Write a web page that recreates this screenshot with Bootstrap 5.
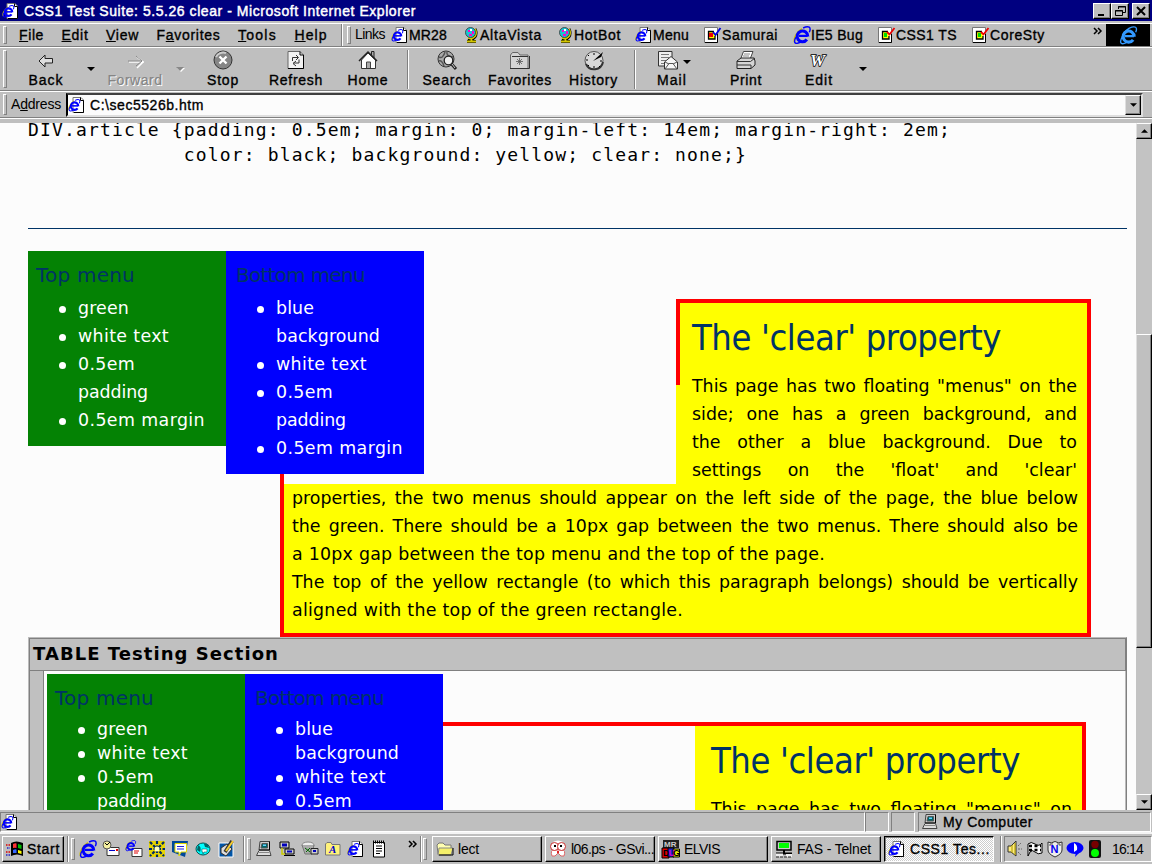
<!DOCTYPE html>
<html lang="en">
<head>
<meta charset="utf-8">
<title>CSS1 Test Suite: 5.5.26 clear - Microsoft Internet Explorer</title>
<link href="https://cdn.jsdelivr.net/npm/bootstrap@5.3.0/dist/css/bootstrap.min.css" rel="stylesheet">
<style>
body{margin:0;width:1152px;height:864px;overflow:hidden;background:#bfbfbf;color:#000;font:14px/16px "Liberation Sans",Arial,sans-serif}
svg{display:block;flex:none;overflow:visible}
[data-w]{display:inline-block;white-space:pre;flex:none}
.bolder{-webkit-text-stroke:.35px #000}
.titlebar{height:21px;background:#000080;color:#fff;padding:0 2px 0 2px}
.titlebar [data-w]{font-weight:500;-webkit-text-stroke:.45px #fff}
.title-edge{height:3px;border-bottom:1px solid #fff;background:#c0c0c0;flex:none}
.winbtn{width:18px;height:16px;background:#c0c0c0;border:1px solid;border-color:#fff #000 #000 #fff;box-shadow:inset -1px -1px #808080}
.win-close{margin-left:3px}
.band{border-bottom:1px solid #808080;box-shadow:0 1px #fff;margin-bottom:1px;padding-left:3px;flex:none}
.menu-row{height:23px}
.tool-row{height:43px}
.addr-row{height:26px}
.raised-label{margin-top:-2px}
.grip{width:4px;align-self:stretch;margin:2px 0;border:1px solid;border-color:#fff #808080 #808080 #fff;flex:none}
.vsep{width:2px;align-self:stretch;border-left:1px solid #808080;border-right:1px solid #fff;flex:none}
.menus{gap:17.5px;margin-left:12px;width:322px;flex:none}
.linkset{gap:15px;margin-left:6px}
.linkset svg{width:18px;height:18px}
.linkset>div{align-items:center}
.linkset .globe{width:16px}
.fav-a{margin-left:2px}.fav-b{margin-left:1px}.fav-c{margin-left:-1px}
.brand-tile{width:44px;height:22px;background:#000;margin-right:2px}
.tools{display:grid;grid-template-columns:64px 26px 62px 28px 58px 88px 56px 24px 54px 92px 55px 27px 48px 100px 46px 42px;margin-left:7px;height:42px}
.tools>div{display:flex;flex-direction:column;align-items:center;padding-top:2px}
.tools svg{width:22px;height:22px}
.tools .vsep{height:39px;align-self:center}
.tools .drop{padding-top:19px}
.drop svg{width:8px;height:4px}
.off{color:#858585;text-shadow:1px 1px #fff;-webkit-text-stroke:.2px #858585}
.mail-pic{margin-left:-8px}
.tools .mail-drop{left:35px;top:12px;width:8px;height:4px}
.addrbox{height:24px;width:1077px;border:2px solid;border-color:#404040 #dfdfdf #dfdfdf #000;background:#fcfcfc;margin-left:5px}
.page-area{height:687px;background:#fcfcfc;overflow:hidden;flex:none;font-family:"DejaVu Sans",sans-serif;font-size:17.4px;margin-top:4px}
.doc{width:1136px;padding:0 9px 0 28px;height:687px;overflow:hidden;flex:none}
.code-text{font:18px/25px "DejaVu Sans Mono",monospace;height:106px;margin-top:-6px}
.code-text [data-w]{display:block;width:max-content}
.rule{height:1px;background:#036;margin-bottom:22px;margin-top:5px}
.float-menu{width:198px;padding:9px 8px;color:#fff;line-height:28px;flex:none}
.float-menu h3{font-size:20px;line-height:31px;height:34px;margin:0;color:#036;font-weight:400}
.float-menu ul{margin:0;padding-left:42px;list-style:none}
.float-menu li{position:relative}
.float-menu li::before{content:"";position:absolute;left:-19px;top:12px;width:7px;height:7px;border-radius:50%;background:#fff}
.float-menu [data-w]{vertical-align:top}
.is-green{background:#048204;height:195px}
.is-blue{background:#0000fe;height:223px}
.is-blue h3{padding-left:2px}
.menus-row{height:233px}
.art-top{width:415px;height:185px;margin-top:48px;background:#ff0;border:solid #f00;border-width:4px 4px 0 0;padding:15px 10px 0 16px;margin-left:252px;position:relative}
.art-top::before{content:"";position:absolute;left:0;top:-4px;width:4px;height:86px;background:#f00}
.art-top h1,.art-two h1{font-family:"DejaVu Sans Condensed","DejaVu Sans",sans-serif;font-size:36px;line-height:40px;color:#036;font-weight:400;margin:0 0 14px}
.jl{text-align:justify;text-align-last:justify;line-height:28px;height:28px;white-space:nowrap}
.nl{line-height:28px;height:28px}
.art-low{margin-left:252px;width:811px;height:153px;border:4px solid #f00;border-top:0;background:#ff0;padding:0 9px 0 8px;position:relative}
.art-low::before{content:"";position:absolute;left:-4px;top:-10px;width:4px;height:10px;background:#f00}
.tbl{border:1px solid #bbb;border-bottom:0;border-right-color:#808080;width:1099px;height:180px}
.tbl-head{height:33px;background:#c0c0c0;border:1px solid #808080;font-size:18px;font-weight:700;line-height:30px;padding-left:3px}
.tbl-side{width:14px;background:#c0c0c0;border-left:1px solid #808080;flex:none}
.tbl-cell{border-left:1px solid #808080;border-right:1px solid #bbb;padding:3px 0 0 3px;flex:1}
.float-menu.tight{line-height:24px;height:200px}
.tight li::before{top:10px}
.art-two{height:150px;margin-top:48px;width:643px;border:solid #f00;border-width:4px 4px 0 0;background:linear-gradient(90deg,#fcfcfc 252px,#ff0 252px);padding:15px 10px 0 268px}
.scroller{width:16px;background:#c3c3c3}
.sbtn{width:16px;height:16px;border:1px solid;border-color:#fff #000 #000 #dfdfdf;box-shadow:inset -1px -1px #808080;background:#c0c0c0;display:flex;align-items:center;justify-content:center}
.sbtn svg{width:7px;height:4px}
.addrbox .sbtn{height:20px}
.sbtn.thumb{height:314px;margin-top:195px}
.status{height:24px;padding-top:2px;border-bottom:2px solid #f4f4f4}
.pane{height:20px;border:1px solid;border-color:#808080 #fff #fff #808080;flex:none}
.pane-main{width:865px}.pane-sm{width:24px;margin-left:2px}.pane-zone{width:233px;margin:0 1px 0 3px;padding-left:2px}
.taskbar{height:30px;padding:2px}
.task{width:110px;height:26px;border:1px solid;border-color:#fff #000 #000 #fff;box-shadow:inset -1px -1px #808080;padding-left:3px;gap:4px;margin-right:3px;flex:none}
.task.startb{width:62px;gap:3px}
.task svg,.quick svg{width:18px;height:18px}
.task.on{border-color:#000 #fff #fff #000;background:repeating-conic-gradient(#fff 0 25%,#ccc 0 50%) 0 0/2px 2px;box-shadow:inset 1px 1px #808080;margin-right:6px}
.quick{gap:5px;margin-left:4px;width:164px;flex:none}
.quick-b{width:153px}
.grip-a{margin-left:2px}.grip-b{margin:2px 5px 2px 1px}
.tray{height:26px;width:148px;border:1px solid;border-color:#808080 #fff #fff #808080;padding-left:2px;gap:4px;margin-left:2px;flex:none}
.tray svg{width:16px;height:18px}
.tray [data-w]{margin-left:5px}
</style>
</head>
<body class="d-flex flex-column">
<svg width="0" height="0" class="position-absolute">
<defs>
<g id="swirl" fill="none"><path d="M1.500 14C0 11 4 5 8 2.500" stroke="#d2c300" stroke-width="1.600"/><path d="M13 8.800H5" stroke="#00f" stroke-width="2"/><path d="M13.200 9.300A4.800 4.800 0 1 0 12.300 12" stroke="#00f" stroke-width="2.700"/><path d="M9 1.800C14-.5 16.500 1 14.500 5.500M2.500 10C0 15 2 17 7 14" stroke="#00f" stroke-width="1.300"/></g>
<symbol id="ie" viewBox="0 0 16 16"><use href="#swirl"/></symbol>
<symbol id="doc" viewBox="0 0 18 18"><path d="M5 1.500H13L15.500 4V16.500H5Z" fill="#fff" stroke="#777"/><path d="M12.500 1.500V4.500H15.500V16.500H6" fill="none" stroke="#000"/><use href="#swirl" transform="translate(0 3) scale(.78)"/></symbol>
<symbol id="globe" viewBox="0 0 16 18"><path d="M3 15.500H12M7.500 12V15M4 13C10 15 14 9 11 3" stroke="#000" stroke-width="3" fill="none"/><path d="M3 15.500H12M7.500 12V15M4 12C10 14 14 9 11 3" stroke="#d5c800" stroke-width="1.800" fill="none"/><circle cx="6.500" cy="6.500" r="5" fill="#19c5d2" stroke="#333" stroke-width=".8"/><path d="M4 4H6V6H4ZM8 5H10V8H8ZM5 8H8V10H5Z" fill="#f0c"/><path d="M6 3H8V5H6Z" fill="#fff"/></symbol>
<symbol id="shr" viewBox="0 0 18 18"><path d="M.500 1.500H13.500V16.500H.500Z" fill="#fff" stroke="#777"/><path d="M13.500 8V16.500H1" fill="none" stroke="#000"/><path d="M10 5.500H4.500V13H11V10" fill="#ff0" stroke="#000" stroke-width="1.300"/><path d="M5 7H9V11H5Z" fill="#e00"/><path d="M9 6L11.500 9 16.500 2" fill="none" stroke="#00d" stroke-width="1.800"/></symbol>
<symbol id="shg" viewBox="0 0 18 18"><path d="M.500 1.500H13.500V16.500H.500Z" fill="#fff" stroke="#777"/><path d="M13.500 8V16.500H1" fill="none" stroke="#000"/><path d="M10 5.500H4.500V13H11V10" fill="#ff0" stroke="#000" stroke-width="1.300"/><path d="M6 7H9V11H6Z" fill="#0d0"/><path d="M9 6L11.500 8.500 16.500 2" fill="none" stroke="#e00" stroke-width="1.800"/></symbol>
<symbol id="down" viewBox="0 0 8 4"><path d="M0 0H8L4 4Z" fill="#000"/></symbol>
<symbol id="up" viewBox="0 0 8 4"><path d="M0 4H8L4 0Z" fill="#000"/></symbol>
<symbol id="pc" viewBox="0 0 18 18"><path d="M5 1.500H14.500V10H4Z" fill="#ccc" stroke="#444"/><path d="M14.500 1.500V10H4" stroke="#000" fill="none"/><path d="M7 3.500H12.500V8H6Z" fill="#066" stroke="#555"/><path d="M8 4.500H11V6H8Z" fill="#6cf"/><path d="M4 10.500H14.500L16 15.500H1.500Z" fill="#ddd" stroke="#444"/><path d="M4 12.500H14" stroke="#888"/></symbol>
<symbol id="folder" viewBox="0 0 18 18"><path d="M1 5L3 3H7L9 5H15V14H2Z" fill="#ffffb0" stroke="#777"/><path d="M3 8H17L15 15H2Z" fill="#f5f06a" stroke="#888"/><path d="M17 8V15H3" stroke="#000" fill="none"/></symbol>
</defs>
</svg>

<header class="titlebar d-flex align-items-center flex-shrink-0">
  <svg width="18" height="18"><use href="#doc"/></svg><span class="ms-1" data-w="392">CSS1 Test Suite: 5.5.26 clear - Microsoft Internet Explorer</span>
  <div class="ms-auto d-flex">
    <div class="winbtn"><svg width="16" height="14"><path d="M4 11H10" stroke="#000" stroke-width="2"/></svg></div>
    <div class="winbtn"><svg width="16" height="14"><path d="M6.500 5V2.500H13.500V8.500H11M6 3H14" fill="none" stroke="#000"/><path d="M3.500 6.500H10.500V11.500H3.500ZM3 7H11" fill="none" stroke="#000"/></svg></div>
    <div class="winbtn win-close"><svg width="16" height="14"><path d="M4 3L12 11M12 3L4 11" stroke="#000" stroke-width="2"/></svg></div>
  </div>
</header>
<div class="title-edge"></div>

<nav class="band menu-row d-flex align-items-center">
  <div class="grip"></div>
  <div class="menus d-flex bolder">
    <span data-w="25"><u>F</u>ile</span><span data-w="27"><u>E</u>dit</span><span data-w="33"><u>V</u>iew</span><span data-w="64">F<u>a</u>vorites</span><span data-w="39"><u>T</u>ools</span><span data-w="33"><u>H</u>elp</span>
  </div>
  <div class="vsep"></div><div class="grip ms-1"></div>
  <span data-w="30" class="ms-1 raised-label">Links</span>
  <div class="linkset d-flex bolder">
    <div class="d-flex"><svg><use href="#doc"/></svg><span data-w="38">MR28</span></div>
    <div class="d-flex fav-a"><svg class="globe"><use href="#globe"/></svg><span data-w="62">AltaVista</span></div>
    <div class="d-flex fav-b"><svg class="globe"><use href="#globe"/></svg><span data-w="47">HotBot</span></div>
    <div class="d-flex fav-c"><svg><use href="#doc"/></svg><span data-w="36">Menu</span></div>
    <div class="d-flex"><svg><use href="#shr"/></svg><span data-w="56">Samurai</span></div>
    <div class="d-flex"><svg><use href="#ie"/></svg><span data-w="52">IE5 Bug</span></div>
    <div class="d-flex"><svg><use href="#shg"/></svg><span data-w="61">CSS1 TS</span></div>
    <div class="d-flex"><svg><use href="#shg"/></svg><span data-w="55">CoreSty</span></div>
  </div>
  <svg width="9" height="7" class="ms-auto me-1 mb-2"><path d="M1 0L4 3 1 6M5 0L8 3 5 6" fill="none" stroke="#000" stroke-width="1.500"/></svg>
  <div class="brand-tile"><svg width="44" height="22"><g transform="translate(13 2) scale(1.15)" fill="none" stroke="#39f"><path d="M13 8.800H5" stroke-width="2"/><path d="M13.200 9.300A4.800 4.800 0 1 0 12.300 12" stroke-width="2.700"/><path d="M9 1.800C14-.5 16.500 1 14.500 5.500M2.500 10C0 15 2 17 7 14M2.500 10Q4 5 9 1.800" stroke-width="1.200"/></g></svg></div>
</nav>

<div class="band tool-row d-flex">
  <div class="grip"></div>
  <div class="tools bolder">
    <div><svg viewBox="0 0 22 22"><path d="M4 11L10 5V8.500H17.500V13H10V17Z" fill="#ddd" stroke="#222"/></svg><span data-w="35">Back</span></div>
    <div class="drop"><svg><use href="#down"/></svg></div>
    <div class="off"><svg viewBox="0 0 22 22"><path d="M4 11H19M12 6L18 11 12 17" fill="none" stroke="#fff" stroke-width="1.500" transform="translate(1 1)"/><path d="M4 11H18M12 6L18 11 12 16" fill="none" stroke="#888"/></svg><span data-w="55">Forward</span></div>
    <div class="drop"><svg><path d="M1 1H9L5 5Z" fill="#fff"/><path d="M0 0H8L4 4Z" fill="#888"/></svg></div>
    <div><svg viewBox="0 0 22 22"><circle cx="11" cy="10" r="9" fill="#858585" stroke="#333"/><path d="M4 7A8 8 0 0 1 14 3" stroke="#ccc" fill="none" stroke-width="2"/><path d="M7.500 6.500L14.500 13.500M14.500 6.500L7.500 13.500" stroke="#fff" stroke-width="2.400"/></svg><span data-w="32">Stop</span></div>
    <div><svg viewBox="0 0 22 22"><path d="M3 1.500H15L18.500 5V18.500H3Z" fill="#f2f2f2" stroke="#666"/><path d="M15 1.500V5H18.500V18.500H3" fill="none" stroke="#000"/><path d="M7.500 11V7.500H13M11 5L13.500 7.500 11 10M14 9.500V13H8.500M11 11L8 13.500 11 16" fill="none" stroke="#333"/></svg><span data-w="54">Refresh</span></div>
    <div><svg viewBox="0 0 22 22"><path d="M14.500 6V1.500H17V8" fill="#aaa" stroke="#222"/><path d="M4.500 10V18.500H18.500V10L11 3Z" fill="#fff" stroke="#333"/><path d="M2 11L11 2L20 11" fill="none" stroke="#222" stroke-width="1.500"/><path d="M9.500 18V12H13.500V18" fill="#aaa" stroke="#444"/></svg><span data-w="41">Home</span></div>
    <div><i class="vsep"></i></div>
    <div><svg viewBox="0 0 22 22"><circle cx="10" cy="9" r="8" fill="#aaa" stroke="#333"/><path d="M3 7Q7 9 9 2M3 11Q6 10 8 16M11 2Q10 6 17 7" fill="none" stroke="#555" stroke-width="1.500"/><circle cx="12.500" cy="10.500" r="4.300" fill="#eee" stroke="#222" stroke-width="1.300"/><path d="M15.500 14L20 19" stroke="#222" stroke-width="3"/><path d="M16 14L19 18" stroke="#ccc"/></svg><span data-w="49">Search</span></div>
    <div><svg viewBox="0 0 22 22"><path d="M1.500 18.500V5L3.500 2.500H9L11 5H19V18.500Z" fill="#d5d5d5" stroke="#666"/><path d="M1 18.500H20.500V6M3 6.500H19" fill="none" stroke="#333"/><path d="M10.500 8V15M7 11.500H14M8 9L13 14M13 9L8 14" stroke="#555" stroke-width=".8"/></svg><span data-w="64">Favorites</span></div>
    <div><svg viewBox="0 0 22 22"><circle cx="11" cy="10.500" r="9" fill="#d8d8d8" stroke="#555"/><path d="M3 14A9 9 0 0 0 20 12" stroke="#333" fill="none" stroke-width="2"/><path d="M10 11L20 2 18 7Z" fill="#000"/><path d="M11 3V5M3 10H5M11 16V18M16 16L17 17M5 5L6 6M17 11H19M5 16L6 15" stroke="#000"/></svg><span data-w="49">History</span></div>
    <div><i class="vsep"></i></div>
    <div class="position-relative"><svg viewBox="0 0 22 22" class="mail-pic"><path d="M1.500 1.500H15V16H1.500Z" fill="#eee" stroke="#333"/><path d="M4 4.500H12M4 7.500H12M4 10.500H9M4 13.500H8" stroke="#777"/><path d="M7.500 12L14 6.500 20.500 12V19H7.500Z" fill="#f6f6f6" stroke="#333"/><path d="M8 19L12 13.500H16L20 19M8 12L12 14M20 12L16 14" stroke="#555" fill="none"/></svg><span data-w="30">Mail</span><svg class="position-absolute mail-drop"><use href="#down"/></svg></div>
    <div><svg viewBox="0 0 22 22"><path d="M6 8L8.500 1.500H18L15.500 8" fill="#fff" stroke="#444"/><path d="M9 4H15M8 6H14" stroke="#888"/><path d="M2 11L6 8H19L20 11V15L16 18.500H2Z" fill="#d5d5d5" stroke="#222"/><path d="M2 11.500H15.500L20 8M2 15H16V18" fill="none" stroke="#333"/></svg><span data-w="32">Print</span></div>
    <div><svg viewBox="0 0 22 22"><text x="2" y="16" font-family="Liberation Serif,serif" font-weight="700" font-style="italic" font-size="17" fill="#fff" stroke="#000" stroke-width="1.500" paint-order="stroke">W</text></svg><span data-w="28">Edit</span></div>
    <div class="drop"><svg><use href="#down"/></svg></div>
  </div>
</div>

<div class="band addr-row d-flex align-items-center">
  <div class="grip"></div>
  <span data-w="50" class="ms-1 raised-label">A<u>d</u>dress</span>
  <div class="addrbox d-flex align-items-center bolder"><svg width="18" height="18"><use href="#doc"/></svg><span data-w="114" class="ms-1">C:\sec5526b.htm</span>
    <div class="sbtn ms-auto"><svg><use href="#down"/></svg></div></div>
</div>

<main class="page-area d-flex">
  <div class="doc">
    <div class="code-text"><span data-w="923">DIV.article {padding: 0.5em; margin: 0; margin-left: 14em; margin-right: 2em;</span><span data-w="719">             color: black; background: yellow; clear: none;}</span></div>
    <div class="rule"></div>
    <div class="d-flex align-items-start menus-row">
      <section class="float-menu is-green"><h3><span data-w="99">Top menu</span></h3><ul><li><span data-w="51">green</span></li><li><span data-w="91">white text</span></li><li><span data-w="57">0.5em</span><br><span data-w="70">padding</span></li><li><span data-w="127">0.5em margin</span></li></ul></section>
      <section class="float-menu is-blue"><h3><span data-w="129">Bottom menu</span></h3><ul><li><span data-w="38">blue</span><br><span data-w="104">background</span></li><li><span data-w="91">white text</span></li><li><span data-w="57">0.5em</span><br><span data-w="70">padding</span></li><li><span data-w="127">0.5em margin</span></li></ul></section>
      <section class="art-top"><h1><span data-w="309">The 'clear' property</span></h1>
        <div class="jl">This page has two floating "menus" on the</div>
        <div class="jl">side; one has a green background, and</div>
        <div class="jl">the other a blue background. Due to</div>
        <div class="jl">settings on the 'float' and 'clear'</div>
      </section>
    </div>
    <section class="art-low">
      <div class="jl">properties, the two menus should appear on the left side of the page, the blue below</div>
      <div class="jl">the green. There should be a 10px gap between the two menus. There should also be</div>
      <div class="nl"><span data-w="533">a 10px gap between the top menu and the top of the page.</span></div>
      <div class="jl">The top of the yellow rectangle (to which this paragraph belongs) should be vertically</div>
      <div class="nl"><span data-w="391">aligned with the top of the green rectangle.</span></div>
    </section>
    <section class="tbl">
      <div class="tbl-head"><span data-w="246">TABLE Testing Section</span></div>
      <div class="d-flex"><div class="tbl-side"></div>
        <div class="tbl-cell d-flex align-items-start">
          <section class="float-menu tight is-green"><h3><span data-w="99">Top menu</span></h3><ul><li><span data-w="51">green</span></li><li><span data-w="91">white text</span></li><li><span data-w="57">0.5em</span><br><span data-w="70">padding</span></li></ul></section>
          <section class="float-menu tight is-blue"><h3><span data-w="129">Bottom menu</span></h3><ul><li><span data-w="38">blue</span><br><span data-w="104">background</span></li><li><span data-w="91">white text</span></li><li><span data-w="57">0.5em</span></li></ul></section>
          <section class="art-two"><h1><span data-w="309">The 'clear' property</span></h1><div class="jl">This page has two floating "menus" on</div></section>
        </div></div>
    </section>
  </div>
  <div class="scroller d-flex flex-column">
    <div class="sbtn"><svg><use href="#up"/></svg></div>
    <div class="sbtn thumb"></div>
    <div class="sbtn mt-auto"><svg><use href="#down"/></svg></div>
  </div>
</main>

<div class="status d-flex flex-shrink-0">
  <div class="pane pane-main"><svg width="18" height="18"><use href="#doc"/></svg></div>
  <div class="pane pane-sm ms-auto"></div><div class="pane pane-sm"></div>
  <div class="pane pane-zone d-flex align-items-center bolder"><svg width="18" height="18"><use href="#pc"/></svg><span class="ms-1" data-w="90">My Computer</span></div>
</div>

<footer class="taskbar d-flex flex-shrink-0">
  <div class="task startb d-flex align-items-center bolder"><svg viewBox="0 0 18 18"><path d="M5 3Q10 0 17 3V16Q11 13 5 16Z" fill="#000"/><path d="M7 4Q9 3 10.500 3.500V8Q9 7.500 7 8Z" fill="#f33"/><path d="M12 4L15.500 5V9L12 8Z" fill="#0b0"/><path d="M7 10Q9 9 10.500 9.500V13H7Z" fill="#36f"/><path d="M12 10L15.500 11V14L12 13Z" fill="#ff0"/><path d="M0 5H4M0 12H4" stroke="#d00" stroke-width="1.500" stroke-dasharray="1.500 1"/><path d="M1 8H4M0 15H5" stroke="#22c" stroke-width="1.500" stroke-dasharray="1.500 1"/></svg><span data-w="33">Start</span></div>
  <div class="vsep"></div><div class="grip grip-a"></div>
  <div class="quick d-flex align-items-center">
    <svg><use href="#ie"/></svg>
    <svg viewBox="0 0 18 18"><path d="M5 7.500H17V15.500H5Z" fill="#fff" stroke="#333"/><path d="M7 10.500H13" stroke="#00c"/><path d="M14 9H16V11H14Z" fill="#d00"/><circle cx="5" cy="5" r="4" fill="#f5f0a0" stroke="#555"/><path d="M3 3L5 5 8 2" stroke="#000" fill="none"/></svg>
    <svg viewBox="0 0 18 18"><path d="M7 8.500H17V16.500H7Z" fill="#fff" stroke="#333"/><path d="M9 11H14M9 13H13" stroke="#d00"/><use href="#swirl" transform="scale(.7)"/></svg>
    <svg viewBox="0 0 18 18"><path d="M1 1H17V17H1Z" fill="#e8d500"/><path d="M2 2L16 16M16 2L2 16M9 1V17M1 9H17" stroke="#002b66" stroke-width="2.200" stroke-dasharray="3 1.500"/><circle cx="9" cy="9" r="2.500" fill="#ffb"/></svg>
    <svg viewBox="0 0 18 18"><path d="M1 1H17L14 17 1 12Z" fill="#00489b"/><path d="M4 3.500H15.500V12H10L8 16V12H4Z" fill="#fff" stroke="#e4d900"/><path d="M6 6.500H13M6 9H13" stroke="#22d"/></svg>
    <svg viewBox="0 0 18 18"><ellipse cx="9" cy="9" rx="7" ry="6" fill="#0ff" stroke="#055"/><path d="M4 5Q8 7 6 12L3 10M10 4H14L15 8 11 7" fill="#066"/><path d="M8 9H13V12H10L9 14V12H8Z" fill="#fff" stroke="#044" stroke-width=".5"/></svg>
    <svg viewBox="0 0 18 18"><path d="M2 3H16V17H2Z" fill="#0054a6" stroke="#fff"/><path d="M4 8L10 4 15 9 9 16 4 13Z" fill="#ddd" stroke="#333"/><path d="M15 1L8 12" stroke="#333" stroke-width="3.500"/><path d="M16 1L9 11" stroke="#f6cc31" stroke-width="2"/></svg>
  </div>
  <div class="vsep"></div><div class="grip grip-a"></div>
  <div class="quick quick-b d-flex align-items-center">
    <svg><use href="#pc"/></svg>
    <svg viewBox="0 0 18 18"><path d="M2 2H11V8H2ZM7 9H16V14H7ZM6 15.500H17" fill="#ccc" stroke="#000"/><path d="M4 3.500H9V6.500H4ZM9 10.500H14V12.500H9Z" fill="#00b"/><path d="M4 8V14H7" fill="none" stroke="#cc0" stroke-width="1.500"/></svg>
    <svg viewBox="0 0 18 18"><ellipse cx="7" cy="5" rx="6" ry="3" fill="#eee" stroke="#888"/><path d="M1 5L4 14H11L13 5" fill="#aaa" stroke="#777"/><path d="M4 8L9 12M9 8L5 12" stroke="#060"/><path d="M10 8.500H17V14H10Z" fill="#ccc" stroke="#222"/><path d="M12 10H15V12H12Z" fill="#00b"/></svg>
    <svg viewBox="0 0 18 18"><path d="M1.500 15V4L3 2.500H7L8 4.500H16V15Z" fill="#fff27a" stroke="#777"/><text x="5" y="13" font-family="Liberation Serif,serif" font-size="11" font-weight="700" font-style="italic" fill="#00c">A</text></svg>
    <svg><use href="#doc"/></svg>
    <svg viewBox="0 0 18 18"><path d="M3.500 2.500H14.500V17H3.500Z" fill="#fff" stroke="#000"/><path d="M3 2H15" stroke="#000" stroke-width="3" stroke-dasharray="1 1"/><path d="M6 6H12M6 8.500H12M6 11H12M6 13.500H10" stroke="#000"/></svg>
  </div>
  <svg width="10" height="8" class="mt-1"><path d="M1 1L4 4 1 7M5 1L8 4 5 7" fill="none" stroke="#000" stroke-width="1.500"/></svg>
  <div class="vsep grip-a"></div><div class="grip grip-b"></div>
  <div class="task d-flex align-items-center"><svg><use href="#folder"/></svg><span data-w="21">lect</span></div>
  <div class="task d-flex align-items-center"><svg viewBox="0 0 18 18"><path d="M3 16Q1 10 5 10H13Q17 10 15 16H12L9 13 6 16Z" fill="#fff" stroke="#d66"/><path d="M4 2Q9-1 14 2V8H4Z" fill="#fff"/><circle cx="5.500" cy="6.500" r="4" fill="#fff" stroke="#c33"/><circle cx="12.500" cy="6.500" r="4" fill="#fff" stroke="#c33"/><path d="M5 6H7M11 6H13" stroke="#000" stroke-width="2"/><path d="M8 11H10V13H8Z" fill="#d22"/></svg><span data-w="83">l06.ps - GSvi...</span></div>
  <div class="task d-flex align-items-center"><svg viewBox="0 0 18 18"><path d="M1 0H17V8H1Z" fill="#222"/><path d="M0 8H7V18H0Z" fill="#d00" stroke="#000"/><path d="M6 8H12V17H6Z" fill="#22c" stroke="#000"/><path d="M11 9H17.500V17H11Z" fill="#ee0" stroke="#000"/><g font-family="Liberation Sans,sans-serif" font-weight="700" font-size="9"><text x="2" y="7" font-size="8" fill="#ccc">MR</text><text x="1" y="16" fill="#000">D</text><text x="6.500" y="16" fill="#c0c">U</text><text x="11" y="16" fill="#000">G</text></g></svg><span data-w="36">ELVIS</span></div>
  <div class="task d-flex align-items-center"><svg viewBox="0 0 18 18"><path d="M2 1.500H16V10H2Z" fill="#ccc" stroke="#000" stroke-width="1.500"/><path d="M4 3H14V8H4Z" fill="#0f0"/><path d="M9 10V13M1 13.500H17" stroke="#000" stroke-width="2"/><path d="M1 15H8M11 15.500H17" stroke="#eee" stroke-width="3"/><path d="M1 17H17" stroke="#222" stroke-dasharray="3 1"/></svg><span data-w="74">FAS - Telnet</span></div>
  <div class="task on d-flex align-items-center bolder"><svg><use href="#doc"/></svg><span data-w="80">CSS1 Tes...</span></div>
  <div class="vsep"></div>
  <div class="tray d-flex align-items-center">
    <svg viewBox="0 0 16 18"><path d="M1 6H4L9 1V16L4 12H1Z" fill="#ffec7a" stroke="#333"/><path d="M5 5V13M8 3V15" stroke="#a90"/><path d="M11 6L14 3M11 9H15M11 12L14 15" stroke="#666" stroke-dasharray="2 1"/></svg>
    <svg viewBox="0 0 16 18"><path d="M1 4Q4 1 8 4T15 3V13Q11 15 8 12T3 12L1 16Z" fill="#fff" stroke="#000"/><path d="M2 6H14M2 10H14" stroke="#000" stroke-width="2.400" stroke-dasharray="3 2.500"/></svg>
    <svg viewBox="0 0 16 18"><path d="M1 2Q4 4 8 1.500 12 4 15 2V10Q15 14 8 17 1 14 1 10Z" fill="#eee" stroke="#333"/><path d="M3 6V4H6M10 4H13V6" stroke="#555" fill="none"/><text x="3.500" y="13" font-family="Liberation Sans,sans-serif" font-size="11" font-weight="700" fill="#00e">N</text></svg>
    <svg viewBox="0 0 16 18"><ellipse cx="8" cy="8" rx="8.500" ry="6" fill="#00f"/><path d="M9 12L8 17 13 12" fill="#00f"/><path d="M7 3Q11 5 10 10L7 12Z" fill="#fff"/></svg>
    <svg viewBox="0 0 16 18"><rect x="2" y="0" width="12" height="18" rx="2" fill="#111"/><circle cx="8" cy="4.500" r="3.700" fill="#700"/><circle cx="8" cy="13" r="4" fill="#0f0"/></svg>
    <span data-w="31">16:14</span>
  </div>
</footer>
<script src="https://cdn.jsdelivr.net/npm/bootstrap@5.3.0/dist/js/bootstrap.bundle.min.js"></script>
<script>
// Track each label out to the width given in data-w.
document.querySelectorAll('[data-w]').forEach(function (el) {
  var extra = el.dataset.w - el.getBoundingClientRect().width;
  el.style.letterSpacing = extra / el.textContent.length + 'px';
});
</script>
</body>
</html>
